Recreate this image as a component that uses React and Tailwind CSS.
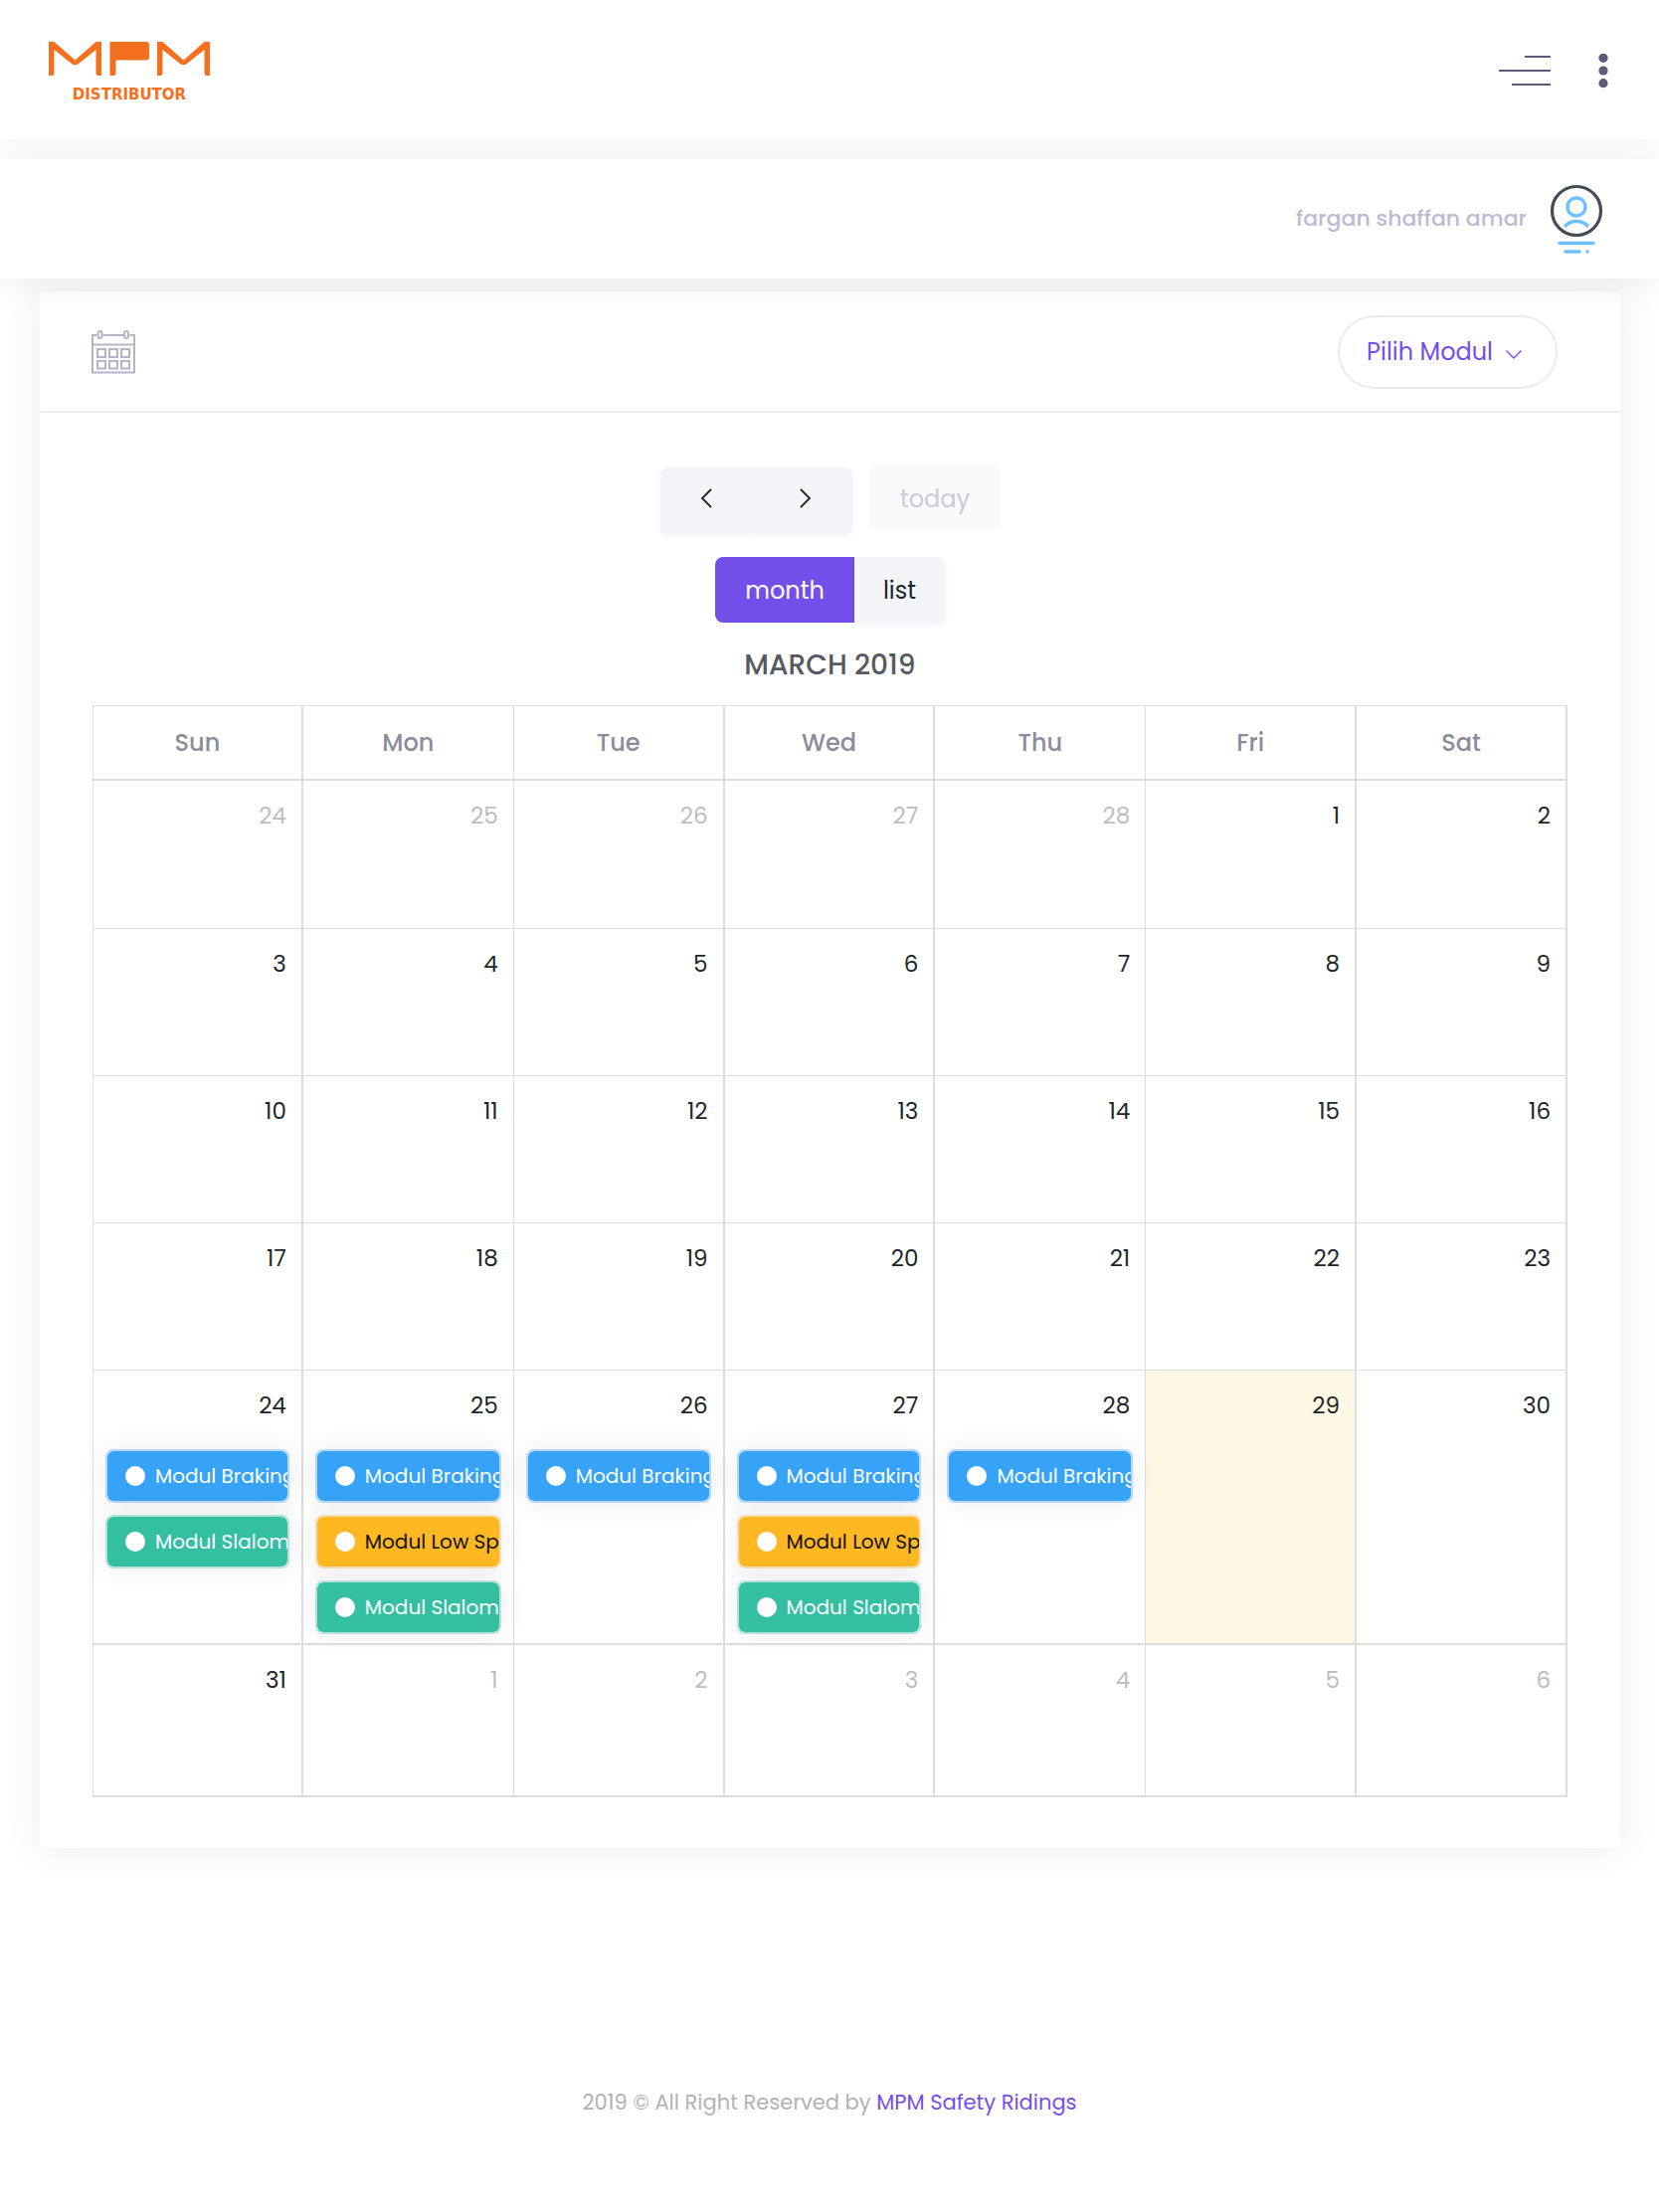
import React from "react";

const DAYS = ["Sun", "Mon", "Tue", "Wed", "Thu", "Fri", "Sat"];

const braking = { title: "Modul Braking", tone: "blue" };
const slalom = { title: "Modul Slalom", tone: "green" };
const lowSpeed = { title: "Modul Low Speed", tone: "amber" };

const WEEKS = [
  [{ d: 24, out: true }, { d: 25, out: true }, { d: 26, out: true }, { d: 27, out: true }, { d: 28, out: true }, { d: 1 }, { d: 2 }],
  [3, 4, 5, 6, 7, 8, 9].map((d) => ({ d })),
  [10, 11, 12, 13, 14, 15, 16].map((d) => ({ d })),
  [17, 18, 19, 20, 21, 22, 23].map((d) => ({ d })),
  [
    { d: 24, events: [braking, slalom] },
    { d: 25, events: [braking, lowSpeed, slalom] },
    { d: 26, events: [braking] },
    { d: 27, events: [braking, lowSpeed, slalom] },
    { d: 28, events: [braking] },
    { d: 29, today: true },
    { d: 30 },
  ],
  [{ d: 31 }, { d: 1, out: true }, { d: 2, out: true }, { d: 3, out: true }, { d: 4, out: true }, { d: 5, out: true }, { d: 6, out: true }],
];

const ROW_STYLE = [
  "h-[149px] border-b",
  "h-[148px] border-b",
  "h-[148px] border-b",
  "h-[148px] border-b",
  "h-[276px] border-b-2",
  "h-[153px] border-b-2",
];

const COL_BORDER = [
  "border-l border-r-2",
  "border-r",
  "border-r-2",
  "border-r-2",
  "border-r",
  "border-r-2",
  "border-r-2",
];

const TONES = {
  blue: "bg-[#36a3f7] border-[#b4d8f6] text-white",
  green: "bg-[#34bfa3] border-[#b4e3d8] text-white",
  amber: "bg-[#ffb822] border-[#f5dfb2] text-[#111111]",
};

function Logo() {
  return (
    <a href="#home" className="flex w-[162px] flex-col items-center pt-[6px] text-[#f37021]">
      <svg viewBox="0 0 162 34" className="h-[34px] w-[162px]" fill="currentColor" aria-label="MPM">
        <path d="M0 0H5.5L26.5 18.5L47.500 0H53V34H50Q47.500 34 47.500 31.500V8L30 22Q26.500 24.500 23 22L5.500 8V31.500Q5.500 34 3 34H0Z" />
        <path d="M61.500 0H98Q101 0 101 3V15.500Q101 18.500 98 18.500H67.500V31.500Q67.500 34 65 34H61.500Z" />
        <path d="M109 0H114.500L135.500 18.500L156.500 0H162V34H159Q156.500 34 156.500 31.500V8L139 22Q135.500 24.500 132 22L114.500 8V31.500Q114.500 34 112 34H109Z" />
      </svg>
      <span className="mt-[10px] font-['DejaVu_Sans',sans-serif] text-[15px] leading-[18px] font-bold">DISTRIBUTOR</span>
    </a>
  );
}

function MenuIcon() {
  return (
    <svg viewBox="0 0 52 30" className="h-[30px] w-[52px]" fill="#5d5b78" aria-hidden="true">
      <rect x="26" y="0" width="26" height="2" />
      <rect x="0" y="14" width="52" height="2" />
      <rect x="13" y="28" width="39" height="2" />
    </svg>
  );
}

function DotsIcon() {
  return (
    <svg viewBox="0 0 10 36" className="h-9 w-[10px]" fill="#5d5b78" aria-hidden="true">
      <circle cx="5" cy="5.300" r="4.600" />
      <circle cx="5" cy="18" r="4.600" />
      <circle cx="5" cy="30.700" r="4.600" />
    </svg>
  );
}

function AvatarIcon() {
  return (
    <svg viewBox="0 0 54 70" className="h-[70px] w-[54px]" fill="none" strokeLinecap="round" aria-hidden="true">
      <circle cx="27" cy="27" r="24.500" stroke="#454b54" strokeWidth="3.200" />
      <g stroke="#6ec1ff" strokeWidth="3.400">
        <circle cx="27" cy="23" r="9" />
        <path d="M16 42Q20 37.500 27 37.500T38 42" />
        <path d="M10 59.500H44" />
        <path d="M16 68H30M38 68H38.100" />
      </g>
    </svg>
  );
}

function CalendarIcon() {
  return (
    <svg viewBox="0 0 44 44" className="h-11 w-11" fill="none" stroke="#b5b3ca" strokeWidth="2" aria-hidden="true">
      <path d="M5.500 5H1V42.500H43V5H38.500M11.500 5H32.500M1 14.500H43" />
      <rect x="6.500" y="1" width="4" height="7" rx="2" />
      <rect x="33" y="1" width="4" height="7" rx="2" />
      <path d="M6 19h8v8H6zM18 19h8v8h-8zM30 19h8v8h-8zM6 31h8v7.500H6zM18 31h8v7.500h-8zM30 31h8v7.500h-8z" />
    </svg>
  );
}

function Event({ title, tone }) {
  return (
    <a
      href="#event"
      className={"flex h-[54px] items-center gap-[10px] overflow-hidden rounded-[8px] border-2 bg-clip-padding pl-[18px] text-[20px] leading-7 whitespace-nowrap shadow-[0_0_28px_1px_rgba(0,0,0,0.07)] " + TONES[tone]}
    >
      <span className="size-5 shrink-0 rounded-full bg-white" />
      <span>{title}</span>
    </a>
  );
}

export default function App() {
  return (
    <div className="min-h-screen bg-white font-[Poppins,Inter,sans-serif] text-[#212529]">
      <header className="relative z-20 flex h-[140px] items-center justify-between bg-white pr-[51px] pl-[49px] shadow-[0_0_36px_rgba(0,0,0,0.04)]">
        <Logo />
        <div className="flex items-center gap-[48px] pt-[2px]">
          <button type="button" aria-label="Toggle menu"><MenuIcon /></button>
          <button type="button" aria-label="More"><DotsIcon /></button>
        </div>
      </header>

      <div className="relative z-30 mt-5 flex h-[120px] items-center justify-end gap-[23px] bg-white pr-14 shadow-[0_4px_36px_rgba(0,0,0,0.08)]">
        <span className="text-[22px] leading-8 font-medium text-[#bdbad3]">fargan shaffan amar</span>
        <button type="button" aria-label="Profile"><AvatarIcon /></button>
      </div>

      <main className="mt-[13px] mr-[39px] ml-10 bg-white shadow-[0_1px_36px_rgba(0,0,0,0.08)]">
        <div className="flex h-[122px] items-center justify-between border-b-2 border-[#ebedf2] pt-[2px] pr-[63px] pl-[52px]">
          <CalendarIcon />
          <button type="button" className="flex h-[74px] items-center gap-[13px] rounded-full border-2 border-[#ebe9f2] pr-[34px] pl-[27px] text-[24px] leading-8 text-[#734ee8]">
            <span>Pilih Modul</span>
            <svg viewBox="0 0 16 9" className="mt-1 h-[9px] w-4" fill="none" stroke="#734ee8" strokeWidth="1.400" aria-hidden="true">
              <path d="M0.500 0.500L8 8L15.500 0.500" />
            </svg>
          </button>
        </div>

        <div className="px-[53px] pt-[53px] pb-[51px]">
          <div className="flex flex-col items-center">
            <div className="flex items-start gap-[18px]">
              <div className="mt-[2px] flex rounded-lg bg-[#f4f5f8] shadow-[0_2px_6px_rgba(0,0,0,0.05)]">
                <button type="button" aria-label="Previous" className="flex h-[67px] w-[95px] items-center justify-center border-r border-[#eeeff3] pr-[2px] pb-[6px]">
                  <svg viewBox="0 0 12 20" className="h-5 w-3" fill="none" stroke="#222222" strokeWidth="1.800" aria-hidden="true"><path d="M11 1L2 10L11 19" /></svg>
                </button>
                <button type="button" aria-label="Next" className="flex h-[67px] w-[98px] items-center justify-center pb-[6px] pl-1">
                  <svg viewBox="0 0 12 20" className="h-5 w-3" fill="none" stroke="#222222" strokeWidth="1.800" aria-hidden="true"><path d="M1 1L10 10L1 19" /></svg>
                </button>
              </div>
              <button type="button" disabled className="h-[66px] w-[130px] rounded-lg bg-[#fafafc] pt-[2px] text-[24px] leading-8 text-[#cacbd6]">today</button>
            </div>
            <div className="mt-[23px] flex">
              <button type="button" className="h-[66px] w-[140px] rounded-l-lg bg-[#734ee8] pt-[2px] text-[24px] leading-8 text-white">month</button>
              <button type="button" className="h-[66px] w-[91px] rounded-r-lg bg-[#f4f5f8] pt-[2px] text-[24px] leading-8 text-[#212529] shadow-[0_2px_6px_rgba(0,0,0,0.05)]">list</button>
            </div>
            <h2 className="mt-[23px] text-[28px] leading-10 font-medium text-[#575962]">MARCH 2019</h2>
          </div>

          <table className="mt-5 w-full table-fixed border-separate border-spacing-0">
            <thead>
              <tr>
                {DAYS.map((day, i) => (
                  <th key={day} scope="col" className={"h-[76px] border-t border-b-2 border-[#dddddd] p-0 text-center align-middle text-[24px] leading-8 font-medium text-[#8a8c9b] " + COL_BORDER[i]}>
                    {day}
                  </th>
                ))}
              </tr>
            </thead>
            <tbody>
              {WEEKS.map((week, w) => (
                <tr key={w}>
                  {week.map((cell, i) => (
                    <td key={i} className={"border-[#dddddd] px-3 pt-[19px] pb-0 align-top " + ROW_STYLE[w] + " " + COL_BORDER[i] + (cell.today ? " bg-[#fef7e4]" : "")}>
                      <div className={"pr-[3px] text-right text-[23px] leading-8 " + (cell.out ? "text-[#bcbdbe]" : "text-[#212529]")}>{cell.d}</div>
                      {cell.events && (
                        <div className="mt-[28px] flex flex-col gap-3">
                          {cell.events.map((e) => <Event key={e.title} {...e} />)}
                        </div>
                      )}
                    </td>
                  ))}
                </tr>
              ))}
            </tbody>
          </table>
        </div>
      </main>

      <footer className="pt-[240px] pb-[94px] text-center text-[21px] leading-8 text-[#afb2b5]">
        2019 © All Right Reserved by <a href="#mpm" className="text-[#734ee8]">MPM Safety Ridings</a>
      </footer>
    </div>
  );
}
